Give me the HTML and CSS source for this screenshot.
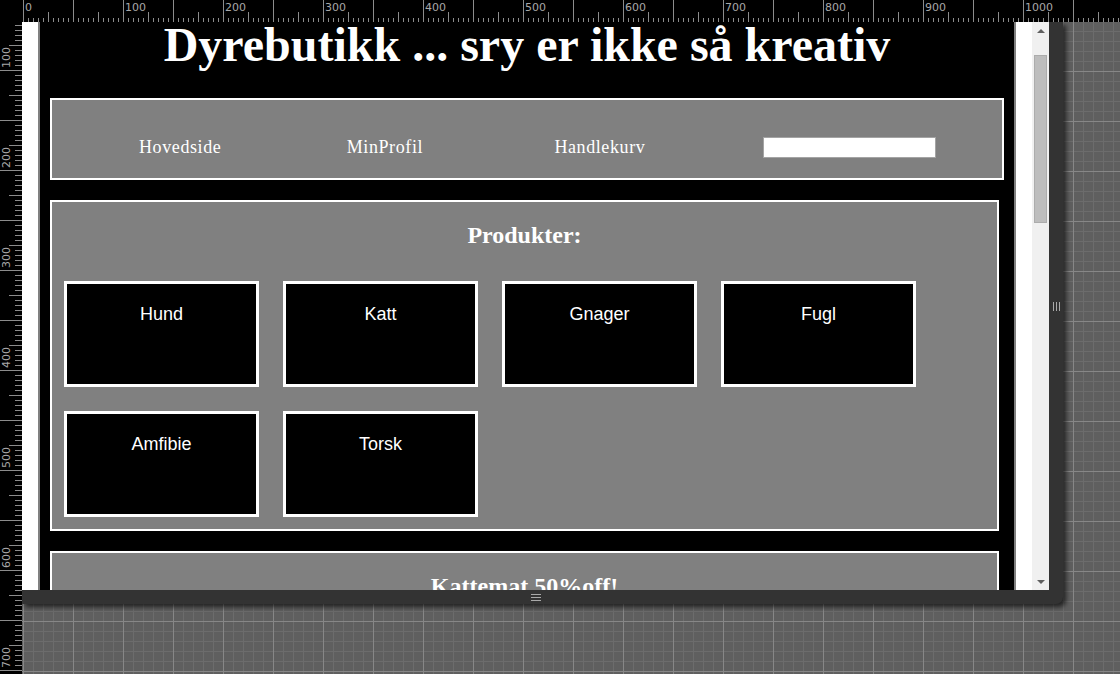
FILE: index.html
```html
<!DOCTYPE html>
<html lang="no">
<head>
<meta charset="utf-8">
<title>Dyrebutikk</title>
<link rel="stylesheet" href="styles.css">
</head>
<body>
<div class="app">
  <div class="corner"></div>
  <div class="ruler-top">
    <div class="rt-labels">
      <span>0</span><span>100</span><span>200</span><span>300</span><span>400</span><span>500</span><span>600</span><span>700</span><span>800</span><span>900</span><span>1000</span>
    </div>
  </div>
  <div class="ruler-left">
    <div class="rl-labels">
      <div class="rl-cell"><span>100</span></div>
      <div class="rl-cell"><span>200</span></div>
      <div class="rl-cell"><span>300</span></div>
      <div class="rl-cell"><span>400</span></div>
      <div class="rl-cell"><span>500</span></div>
      <div class="rl-cell"><span>600</span></div>
      <div class="rl-cell"><span>700</span></div>
    </div>
  </div>
  <div class="canvas">
    <div class="frame">
      <div class="frame-main">
        <div class="viewport">
          <div class="site">
            <h1 class="site-title">Dyrebutikk ... sry er ikke så kreativ</h1>
            <nav class="nav">
              <a class="nav-link">Hovedside</a>
              <a class="nav-link">MinProfil</a>
              <a class="nav-link">Handlekurv</a>
              <input class="search" type="text">
            </nav>
            <section class="panel">
              <h2 class="panel-title">Produkter:</h2>
              <div class="cards">
                <div class="card"><p>Hund</p></div>
                <div class="card"><p>Katt</p></div>
                <div class="card"><p>Gnager</p></div>
                <div class="card"><p>Fugl</p></div>
                <div class="card"><p>Amfibie</p></div>
                <div class="card"><p>Torsk</p></div>
              </div>
            </section>
            <section class="panel panel-offer">
              <h2 class="panel-title">Kattemat 50%off!</h2>
            </section>
          </div>
        </div>
        <div class="scrollbar">
          <div class="sb-btn"><span class="tri-up"></span></div>
          <div class="sb-thumb"></div>
          <div class="sb-track"></div>
          <div class="sb-btn"><span class="tri-down"></span></div>
        </div>
        <div class="frame-right">
          <div class="grip-v"><i></i><i></i><i></i></div>
        </div>
      </div>
      <div class="frame-bottom">
        <div class="grip-h"><i></i><i></i><i></i></div>
      </div>
    </div>
  </div>
</div>
</body>
</html>
```

FILE: styles.css
```css
* { box-sizing: border-box; }

html, body {
  margin: 0;
  padding: 0;
  width: 1120px;
  height: 674px;
  overflow: hidden;
  background: #5f5f5f;
}

.app {
  display: grid;
  grid-template-columns: 22px 1098px;
  grid-template-rows: 22px 652px;
  width: 1120px;
  height: 674px;
}

.corner { background: #000; }

/* ---------- rulers ---------- */
.ruler-top {
  background-color: #000;
  background-image:
    linear-gradient(90deg, #8c8c8c 0 1px, transparent 1px),
    linear-gradient(90deg, #8c8c8c 0 1px, transparent 1px),
    linear-gradient(90deg, #8c8c8c 0 1px, transparent 1px);
  background-size: 50px 22px, 25px 10px, 5px 4px;
  background-position: 1px 0, 1px 100%, 1px 100%;
  background-repeat: repeat-x;
  overflow: hidden;
}
.rt-labels {
  display: flex;
  padding-left: 1px;
  font: 11px/12px "DejaVu Sans", "Liberation Sans", sans-serif;
  color: #a8a8a8;
}
.rt-labels span {
  flex: 0 0 100px;
  padding: 2px 0 0 2px;
}

.ruler-left {
  background-color: #000;
  background-image:
    linear-gradient(180deg, #8c8c8c 0 1px, transparent 1px),
    linear-gradient(180deg, #8c8c8c 0 1px, transparent 1px),
    linear-gradient(180deg, #8c8c8c 0 1px, transparent 1px);
  background-size: 22px 50px, 13px 25px, 7px 5px;
  background-position: 0 48px, 100% 23px, 100% 3px;
  background-repeat: repeat-y;
  overflow: hidden;
}
.rl-labels {
  display: flex;
  flex-direction: column;
  margin-top: -52px;
}
.rl-cell {
  height: 100px;
  flex: 0 0 100px;
  display: flex;
  flex-direction: column;
  justify-content: flex-end;
  padding: 0 0 2px 1px;
}
.rl-cell span {
  writing-mode: vertical-rl;
  transform: rotate(180deg);
  font: 11px/12px "DejaVu Sans", "Liberation Sans", sans-serif;
  color: #a8a8a8;
}

/* ---------- canvas ---------- */
.canvas {
  overflow: hidden;
  background-color: #5f5f5f;
  background-image:
    linear-gradient(90deg, #878787 0 1px, transparent 1px),
    linear-gradient(180deg, #878787 0 1px, transparent 1px),
    linear-gradient(90deg, #6c6c6c 0 1px, transparent 1px),
    linear-gradient(180deg, #6c6c6c 0 1px, transparent 1px);
  background-size: 50px 50px, 50px 50px, 10px 10px, 10px 10px;
  background-position: 1px 0, 0 49px, 1px 0, 0 9px;
}

.frame {
  width: 1041px;
  display: flex;
  flex-direction: column;
  border-bottom-right-radius: 7px;
  box-shadow: 3px 3px 5px rgba(0, 0, 0, 0.65);
  background: #333;
}
.frame-main {
  display: flex;
  height: 568px;
}
.viewport {
  width: 1010px;
  height: 568px;
  overflow: hidden;
  background: #fff;
}

.scrollbar {
  width: 17px;
  background: #f0f0f0;
  display: flex;
  flex-direction: column;
}
.sb-btn {
  height: 17px;
  flex: 0 0 17px;
  display: flex;
  align-items: center;
  justify-content: center;
}
.tri-up {
  width: 0; height: 0;
  border-left: 4px solid transparent;
  border-right: 4px solid transparent;
  border-bottom: 4px solid #606060;
}
.tri-down {
  width: 0; height: 0;
  border-left: 4px solid transparent;
  border-right: 4px solid transparent;
  border-top: 4px solid #606060;
}
.sb-thumb {
  margin: 16px 2px 0;
  height: 168px;
  flex: 0 0 168px;
  background: #bdbdbd;
  border: 1px solid #acacac;
}
.sb-track { flex: 1; }

.frame-right {
  width: 14px;
  background: #333;
  display: flex;
  align-items: center;
  justify-content: center;
}
.grip-v {
  display: flex;
  gap: 2px;
  padding-left: 1px;
}
.grip-v i {
  display: block;
  width: 1px;
  height: 9px;
  background: #a9a9a9;
}
.frame-bottom {
  height: 14px;
  display: flex;
  align-items: center;
  justify-content: center;
  padding-right: 14px;
}
.grip-h {
  display: flex;
  flex-direction: column;
  gap: 2px;
}
.grip-h i {
  display: block;
  width: 10px;
  height: 1px;
  background: #a9a9a9;
}

/* ---------- the web page ---------- */
.site {
  margin: -5px 16px 0;
  background: #000;
  border-left: 2px solid #808080;
  border-right: 2px solid #808080;
  padding: 0 10px 40px;
  color: #fff;
}
.site-title {
  margin: 0;
  font: 700 48px/55px "Liberation Serif", "Times New Roman", serif;
  text-align: center;
  color: #fff;
}
.nav {
  margin-top: 26px;
  height: 82px;
  border: 2px solid #fff;
  background: #808080;
  display: flex;
  align-items: center;
  padding: 17px 0 0 87px;
}
.nav-link {
  flex: 0 0 207.7px;
  font: 18px/21px "Liberation Serif", "Times New Roman", serif;
  letter-spacing: 0.6px;
  color: #fff;
}
.search {
  width: 173px;
  height: 21px;
  margin: 0 0 0 1px;
  padding: 0;
  border: 1px solid #a4a4a4;
  background: #fff;
}

.panel {
  margin: 20px 5px 0 0;
  border: 2px solid #fff;
  background: #808080;
}
.panel-title {
  margin: 20px 0;
  font: 700 24px "Liberation Serif", "Times New Roman", serif;
  text-align: center;
  color: #fff;
}
.cards {
  display: flex;
  flex-wrap: wrap;
}
.card {
  width: 195px;
  height: 106px;
  margin: 12px;
  border: 3px solid #fff;
  background: #000;
  padding-top: 2px;
}
.card p {
  margin: 18px 0;
  font: 18px "Liberation Sans", Arial, sans-serif;
  text-align: center;
  color: #fff;
}
.panel-offer {
  height: 200px;
}
```
